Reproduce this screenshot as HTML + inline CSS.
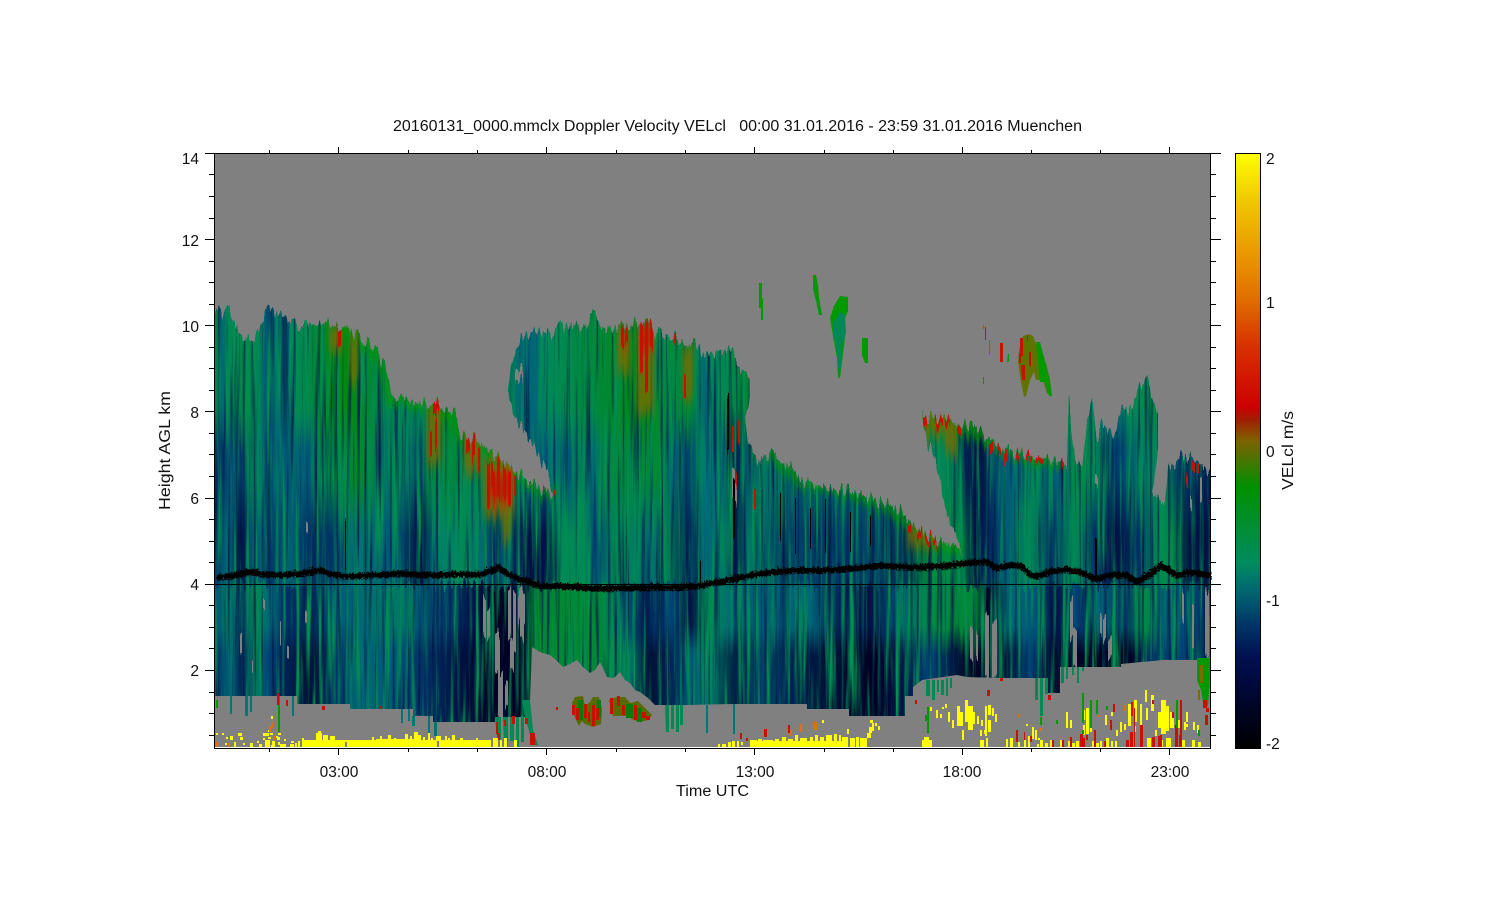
<!DOCTYPE html>
<html><head><meta charset="utf-8"><title>20160131_0000.mmclx Doppler Velocity VELcl</title>
<style>
html,body{margin:0;padding:0;background:#fff;width:1500px;height:900px;overflow:hidden}
#plot{position:absolute;left:215px;top:154px;width:995px;height:593px;background:#808080}
#w{position:absolute;left:0;top:0;width:1500px;height:900px;filter:url(#jag)}
#c{position:absolute;left:0;top:0;width:1500px;height:900px;clip-path:polygon(215px 322px,218px 310px,222px 318px,228px 303px,232px 320px,240px 332px,247px 338px,255px 338px,260px 322px,266px 310px,271px 305px,276px 312px,282px 320px,288px 317px,294px 323px,305px 327px,315px 330px,322px 320px,330px 326px,339px 327px,354px 333px,365px 342px,374px 348px,382px 362px,389px 377px,392px 398px,410px 401px,427px 405px,436px 403px,448px 410px,457px 417px,459px 432px,470px 437px,481px 443px,491px 452px,501px 460px,517px 473px,534px 485px,553px 495px,553px 493px,547px 470px,535px 450px,527px 433px,520px 427px,513px 410px,508px 393px,510px 373px,513px 357px,523px 337px,533px 332px,543px 332px,555px 333px,560px 328px,575px 325px,588px 323px,593px 315px,600px 325px,617px 328px,627px 325px,637px 323px,648px 322px,655px 333px,673px 337px,690px 342px,700px 350px,717px 352px,733px 353px,740px 367px,750px 380px,750px 397px,745px 420px,747px 437px,753px 453px,760px 462px,773px 450px,783px 463px,793px 470px,800px 480px,817px 485px,830px 490px,847px 490px,870px 498px,887px 505px,900px 510px,910px 523px,920px 530px,937px 540px,957px 547px,962px 550px,955px 533px,950px 523px,943px 500px,938px 467px,928px 443px,923px 423px,922px 417px,937px 417px,953px 422px,977px 430px,987px 440px,1003px 447px,1013px 453px,1043px 458px,1063px 463px,1067px 467px,1069px 400px,1072px 440px,1075px 463px,1083px 463px,1085px 437px,1092px 397px,1097px 440px,1102px 423px,1107px 427px,1113px 437px,1123px 407px,1133px 410px,1140px 383px,1147px 380px,1153px 397px,1158px 420px,1158px 453px,1152px 493px,1165px 505px,1168px 470px,1180px 457px,1193px 457px,1200px 467px,1210px 470px,1210px 730px,215px 730px)}
.b{position:absolute;left:0;width:1500px}
#d2{top:600px;height:150px;background:linear-gradient(90deg,#036 214px,#067 232px,#025 240px,#076 255px,#047 268px,#025 285px,#013 310px,#036 335px,#067 360px,#057 395px,#036 420px,#014 460px,#002 490px,#002 525px,#083 535px,#083 600px,#076 630px,#013 650px,#025 670px,#057 690px,#076 710px,#024 735px,#046 760px,#025 790px,#013 830px,#002 875px,#014 900px,#047 930px,#013 960px,#002 975px,#013 1005px,#047 1030px,#013 1050px,#002 1090px,#002 1130px,#036 1150px,#047 1180px,#025 1210px)}
#d1{top:584px;height:70px;-webkit-mask-image:linear-gradient(#000 60%,transparent);mask-image:linear-gradient(#000 60%,transparent);background:linear-gradient(90deg,#057 214px,#076 230px,#036 238px,#085 255px,#067 270px,#036 285px,#025 310px,#057 335px,#067 355px,#076 395px,#057 420px,#036 450px,#014 478px,#002 495px,#013 525px,#083 535px,#083 600px,#067 620px,#025 645px,#047 670px,#014 690px,#085 710px,#067 735px,#057 770px,#067 810px,#036 828px,#014 870px,#057 895px,#084 930px,#083 975px,#002 987px,#067 1010px,#057 1035px,#014 1055px,#047 1075px,#025 1090px,#067 1097px,#036 1125px,#084 1145px,#057 1165px,#047 1195px,#014 1210px)}
#cc{top:300px;height:285px;background:linear-gradient(90deg,#036 214px,#067 228px,#014 241px,#067 255px,#036 269px,#067 285px,#036 310px,#036 335px,#077 355px,#067 370px,#057 395px,#014 421px,#077 435px,#085 465px,#067 484px,#025 496px,#077 507px,#014 525px,#014 545px,#085 560px,#085 585px,#047 595px,#085 615px,#076 640px,#067 650px,#085 665px,#025 687px,#067 705px,#076 725px,#014 735px,#076 748px,#046 790px,#036 830px,#046 875px,#035 905px,#083 930px,#084 960px,#014 975px,#025 985px,#057 1005px,#085 1030px,#036 1052px,#085 1075px,#036 1095px,#014 1115px,#036 1140px,#085 1158px,#084 1172px,#014 1190px,#014 1210px)}
#bb{top:300px;height:235px;-webkit-mask-image:linear-gradient(#000 75%,transparent);mask-image:linear-gradient(#000 75%,transparent);background:linear-gradient(90deg,#036 214px,#036 224px,#067 232px,#036 241px,#085 252px,#077 262px,#036 267px,#067 276px,#057 287px,#067 298px,#057 309px,#085 320px,#083 345px,#082 360px,#084 372px,#057 382px,#085 395px,#076 410px,#036 420px,#084 428px,#083 450px,#085 470px,#083 490px,#083 510px,#067 525px,#057 545px,#077 552px,#057 568px,#085 582px,#067 592px,#084 605px,#083 660px,#067 672px,#046 688px,#077 705px,#067 722px,#014 733px,#056 745px,#076 770px,#056 800px,#066 840px,#056 880px,#076 915px,#085 950px,#025 965px,#014 980px,#057 1000px,#067 1017px,#085 1035px,#057 1050px,#067 1062px,#084 1075px,#085 1095px,#036 1110px,#047 1122px,#076 1140px,#085 1165px,#036 1180px,#025 1210px)}
#aa{top:300px;height:150px;-webkit-mask-image:linear-gradient(#000 72%,transparent);mask-image:linear-gradient(#000 72%,transparent);background:linear-gradient(90deg,#083 214px,#067 222px,#085 230px,#084 245px,#085 258px,#057 266px,#036 271px,#077 277px,#035 284px,#067 290px,#085 297px,#084 310px,#082 322px,#081 345px,#082 362px,#084 375px,#085 392px,#085 427px,#082 445px,#084 470px,#083 500px,#067 520px,#067 532px,#076 545px,#085 555px,#084 575px,#083 600px,#082 625px,#081 650px,#084 665px,#083 690px,#067 705px,#085 720px,#083 745px,#082 760px,#085 850px,#082 925px,#082 990px,#083 1060px,#084 1080px,#077 1100px,#067 1112px,#085 1130px,#084 1150px,#085 1210px)}
svg{position:absolute;left:0;top:0}
text{font-family:"Liberation Sans",sans-serif;font-size:15.5px;fill:#111}
</style></head><body>
<svg width="0" height="0" style="position:absolute"><defs>
<filter id="jag" x="0" y="0" width="1500" height="900" filterUnits="userSpaceOnUse" color-interpolation-filters="sRGB"><feTurbulence type="fractalNoise" baseFrequency="0.3 0.002" numOctaves="2" seed="7" result="n"/><feColorMatrix in="n" values="0 0 0 0 .5 0 2.2 0 0 -.6 0 0 0 0 .5 0 0 0 0 1" result="m"/><feDisplacementMap in="SourceGraphic" in2="m" scale="14" xChannelSelector="R" yChannelSelector="G"/></filter>
</defs></svg>
<div id="plot"></div>
<div id="w"><div id="c">
<div class="b" id="d2"></div><div class="b" id="d1"></div><div class="b" id="cc"></div><div class="b" id="bb"></div><div class="b" id="aa"></div>
<svg width="1500" height="900" viewBox="0 0 1500 900">
<defs>
<filter id="dk" x="214" y="300" width="1000" height="450" filterUnits="userSpaceOnUse" color-interpolation-filters="sRGB"><feTurbulence type="fractalNoise" baseFrequency="0.28 0.006" numOctaves="3" seed="4"/><feColorMatrix values="0 0 0 0 0 0 0 0 0 .08 0 0 0 0 .28 2.8 0 0 0 -1.45"/></filter>
<filter id="lt" x="214" y="300" width="1000" height="450" filterUnits="userSpaceOnUse" color-interpolation-filters="sRGB"><feTurbulence type="fractalNoise" baseFrequency="0.24 0.007" numOctaves="3" seed="11"/><feColorMatrix values="0 0 0 0 0 0 0 0 0 .56 0 0 0 0 .32 3.2 0 0 0 -1.45"/></filter>
<filter id="bl"><feGaussianBlur stdDeviation="3"/></filter>
<filter id="bx"><feGaussianBlur stdDeviation="2 6"/></filter>
</defs>
<rect x="214" y="300" width="1000" height="450" filter="url(#lt)"/>
<rect x="214" y="300" width="1000" height="450" filter="url(#dk)"/>
<path filter="url(#bl)" fill="none" stroke="#090" stroke-width="14" opacity=".6" d="M340 327L354 333 374 348 389 377 392 398 427 405 457 417 459 432 481 443 501 460 534 485 553 495M753 453L773 450 800 480 847 490 887 505 910 523 937 540 962 550M922 417L953 422 987 440 1013 453 1063 463"/>
<g filter="url(#bx)">
<path fill="#7a6a00" opacity=".8" d="M329 327h13v25h-13zM350 333h8v50h-8zM617 328h13v45h-13zM637 323h17v90h-17zM683 343h10v55h-10zM427 405h14v60h-14zM464 433h17v40h-17zM484 457h30v60h-30zM503 510h8v30h-8zM923 417h34v18h-34zM945 430h12v25h-12zM907 527h30v20h-30z"/>
<path fill="#cc1000" opacity=".75" d="M640 324h12v30h-12zM488 470h24v34h-24zM622 328h5v20h-5z"/>
</g>
<path fill="#c81000" d="M338 327h3v16h-3zM433 403h6v12h-6zM435 420h2v30h-2zM430 430h2v25h-2zM466 434h4v16h-4zM472 440h3v22h-3zM478 446h2v25h-2zM487 462h3v45h-3zM491 465h4v25h-4zM497 462h3v40h-3zM503 466h3v30h-3zM508 472h3v35h-3zM514 474h2v20h-2zM640 322h3v50h-3zM645 325h3v70h-3zM650 325h3v28h-3zM621 330h3v20h-3zM625 328h3v14h-3zM684 370h2v25h-2zM674 340h2v10h-2zM738 420h2v25h-2zM732 430h2v25h-2zM735 470h2v30h-2zM754 490h2v20h-2zM923 417h4v9h-4zM935 418h8v8h-8zM945 420h5v8h-5zM957 425h4v8h-4zM990 445h3v10h-3zM998 446h3v6h-3zM1004 450h3v12h-3zM1016 456h3v6h-3zM1026 455h6v7h-6zM1036 456h7v7h-7zM1062 463h2v8h-2zM1192 460h3v10h-3zM1186 470h2v12h-2zM1197 466h2v10h-2zM908 527h3v8h-3zM917 531h5v7h-5zM925 535h6v6h-6zM933 540h5v5h-5zM554 493h2v5h-2z"/>
<path fill="#808080" d="M515 370h8v11h-8zM483 597h3v38h-3zM487 610h3v30h-3zM495 633h5v40h-5zM498 670h5v47h-5zM508 590h3v50h-3zM513 592h3v60h-3zM518 592h7v30h-7zM520 622h4v20h-4zM510 645h4v30h-4zM505 680h3v25h-3zM985 612h4v65h-4zM992 622h5v55h-5zM970 625h3v32h-3zM976 628h2v26h-2zM1070 597h3v40h-3zM1073 630h4v37h-4zM1103 617h3v25h-3zM1108 640h4v20h-4zM1205 590h4v67h-4zM1192 610h2v45h-2zM1182 590h2v30h-2zM1095 473h3v10h-3zM1100 620h2v20h-2zM732 470h3v28h-3zM735 485h2v18h-2zM306 522h2v10h-2zM1190 500h2v12h-2zM1200 480h2v25h-2zM263 605h2v10h-2zM280 620h1v25h-1zM305 610h2v12h-2zM240 640h2v20h-2zM287 645h2v12h-2zM252 665h1v12h-1z"/>
<path fill="#000" d="M727 400h2v55h-2zM733 480h2v60h-2zM700 560h1v24h-1zM1095 540h2v44h-2zM780 490h1v50h-1zM795 500h1v55h-1zM810 510h1v40h-1zM825 500h1v50h-1zM850 510h1v40h-1zM870 520h1v30h-1zM345 520h1v50h-1z"/>
</svg>
</div></div>
<svg width="1500" height="900" viewBox="0 0 1500 900">
<defs>
<filter id="jit" x="200" y="540" width="1020" height="60" filterUnits="userSpaceOnUse"><feTurbulence type="turbulence" baseFrequency="0.35" numOctaves="2" seed="2"/><feDisplacementMap in="SourceGraphic" scale="6" yChannelSelector="R" xChannelSelector="G"/></filter>
<linearGradient id="cb" x1="0" y1="153" x2="0" y2="748" gradientUnits="userSpaceOnUse">
<stop offset="0" stop-color="#ff0"/><stop offset=".08" stop-color="#f0c800"/><stop offset=".185" stop-color="#e89000"/><stop offset=".243" stop-color="#e07000"/><stop offset=".326" stop-color="#d83000"/><stop offset=".427" stop-color="#c00"/><stop offset=".449" stop-color="#a02000"/><stop offset=".482" stop-color="#806000"/><stop offset=".521" stop-color="#407800"/><stop offset=".561" stop-color="#009000"/><stop offset=".69" stop-color="#008c60"/><stop offset=".734" stop-color="#006870"/><stop offset=".79" stop-color="#003868"/><stop offset=".847" stop-color="#001050"/><stop offset=".886" stop-color="#000a40"/><stop offset=".987" stop-color="#000008"/><stop offset="1" stop-color="#000"/>
</linearGradient>
</defs>
<!-- gray below the cloud base -->
<path fill="#808080" d="M1210 657L1197 660 1163 660 1121 664V667H1060V693H1048V678H1000L967 677 957 675 922 680 913 687V696H905V716H849V709H807V704H733L683 705H655L648 698 640 692 635 690 630 683 625 680 620 672 614 678 607 677 603 668 600 662 595 670 590 673 583 667 577 660 570 664 563 667 556 660 550 655 540 652 532 647 530 700V717H495V722H433V716H413V709H350V704H297V696H215V747H1210z"/>
<!-- islands -->
<path fill="#090" d="M759 283h3v15h1v22h-2v-12h-2zM813 275h3l2 10 1 12 3 18h-3l-3-14-3-12zM830 318l4-12 6-10 8 1v14l-5 12 2 15-3 24-2 16h-2l-1-20-4-22zM862 338h6v25h-3l-3-8zM1007 362l1-8h1v8zM983 377h1v7h-1z"/>
<path fill="#085" d="M834 322l6-10 5 3 1 18-4 12-1 20-2 12-2-24-3-18z"/>
<path fill="#5f7300" d="M1019 350l4-14 6-2 4 2 3 8 4 0 4 13 3 10 3 12 1 15h-4l-4-14h-7l-2-8-4 8-4 16-2 1-3-15-3-20z"/>
<path fill="#090" d="M1036 342h4l4 16 4 15 3 15 1 8h-3l-4-14h-5l-2-20z"/>
<path fill="#c81000" d="M1020 338h3v18h-2v7h-2v-10h1zM1021 365h4v15h-3zM1000 343h3v19h-3zM985 327h1v13h-1zM1027 335h1v6h-1zM1029 352h2v14h-2z"/>
<path fill="#7f6a00" d="M989 340h1v15h-1zM983 325h1v4h-1z"/>
<!-- lower clusters -->
<path fill="#5a6a00" d="M572 703l3-6 8-1 2 10 5-4 3-5h6l3 12-1 15-8 3-8-3-3-3-3 5-4-8zM609 700l8-3h8l5 6 8-2 6 6 8 8-4 5-8 2-6-2-8-4h-13z"/>
<path fill="#087b10" d="M578 700h5v20h-5zM597 700h4v18h-4zM626 704h7v14h-7zM637 708h5v14h-5z"/>
<path fill="#c81000" d="M572 705h3v10h-3zM576 708h3v12h-3zM584 704h3v14h-3zM588 712h2v10h-2zM592 705h3v21h-3zM596 708h3v12h-3zM610 698h3v16h-3zM617 696h3v10h-3zM622 705h3v10h-3zM634 705h3v15h-3zM642 712h4v6h-4zM646 716h4v4h-4z"/>
<!-- hanging green/teal -->
<path fill="#085" d="M665 705h4v27h-3zM671 705h3v24h-3zM676 705h3v27h-3zM680 705h3v20h-3zM926 680h4v16h-4zM932 680h3v20h-3zM937 680h2v12h-2zM941 680h3v15h-3zM946 678h2v18h-2zM950 678h2v10h-2zM1035 678h3v22h-3zM1040 678h3v38h-3zM1045 678h3v16h-3zM1061 667h3v16h-3zM1066 667h2v12h-2zM1072 667h2v8h-2zM1077 667h2v16h-2zM1082 667h2v4h-2z"/>
<path fill="#077" d="M230 696h2v18h-2zM245 696h3v20h-3zM250 696h2v16h-2zM292 696h2v20h-2zM401 709h2v14h-2zM408 709h2v12h-2zM412 716h3v10h-3zM428 716h2v17h-2zM434 722h3v14h-3zM733 704h2v30h-2zM706 705h2v28h-2zM1204 665h4v40h-4z"/>
<path fill="#090" d="M278 696h2v36h-2zM216 700h2v8h-2zM1197 658h13v20l-2 28-4 2-3-18-4-10z"/>
<path fill="#085" d="M495 717h6v22h-4zM503 717h5v30h-4zM510 717h4v24h-4zM516 717h3v30h-3zM521 716h3v26h-3z"/>
<path fill="#085" d="M522 700h8l3 30 5 15h-6l-3-15-4-12z"/>
<path fill="#7f6a00" d="M1200 665h3v18h-3zM1198 690h2v10h-2z"/>
<path fill="#c81000" d="M530 733h5v12h-5zM525 718h3v6h-3zM496 722h2v12h-2zM498 733h2v7h-2zM504 720h2v6h-2zM512 716h3v8h-3zM277 693h2v12h-2zM286 700h2v6h-2zM322 706h3v4h-3zM380 706h2v3h-2zM556 707h2v3h-2zM1203 700h4v8h-4zM1206 708h3v4h-3zM764 729h3v8h-3zM788 725h2v8h-2zM740 733h2v6h-2zM746 738h2v3h-2zM915 700h2v4h-2zM1048 695h3v5h-3zM1000 678h3v3h-3zM987 690h3v6h-3z"/>
<!-- bottom yellow -->
<path fill="#ff0" d="M325 740H491V747H325zM316 733h6v7h-6zM318 731h3v3h-3zM323 735h5v6h-5zM330 736h5v4h-5zM304 740h21v7h-21zM372 737h2v4h-2zM380 736h2v4h-2zM388 735h3v5h-3zM394 738h2v2h-2zM376 739h40v2h-40zM405 734h3v6h-3zM410 736h2v4h-2zM414 732h4v8h-4zM418 735h3v5h-3zM423 737h2v3h-2zM428 733h2v7h-2zM431 738h2v2h-2zM436 736h5v4h-5zM445 736h2v4h-2zM448 738h2v2h-2zM452 735h3v5h-3zM460 738h3v2h-3zM476 738h2v2h-2zM493 738h5v9h-5zM500 740h2v7h-2zM504 738h3v9h-3zM514 740h3v7h-3z
M216 733h2v2h-2zM222 733h2v2h-2zM226 737h2v2h-2zM230 736h3v4h-3zM238 733h2v2h-2zM240 737h3v3h-3zM234 742h2v5h-2zM250 743h3v4h-3zM257 741h2v2h-2zM238 733h4v3h-4zM243 743h2v2h-2zM263 733h6v3h-6zM270 733h3v2h-3zM276 736h2v2h-2zM278 733h3v2h-3zM265 740h5v7h-5zM272 741h3v6h-3zM278 742h2v3h-2zM283 744h3v3h-3zM291 741h3v2h-3zM277 737h3v3h-3zM284 739h2v2h-2zM263 738h2v2h-2zM268 737h3v2h-3zM295 743h2v4h-2zM298 741h2v6h-2zM302 738h2v9h-2zM306 742h2v5h-2zM290 744h4v3h-4zM259 744h3v3h-3zM225 743h2v2h-2zM216 743h2v4h-2zM280 744h3v3h-3zM271 745h2v2h-2z
M722 744h4v3h-4zM728 742h3v5h-3zM732 741h3v6h-3zM737 741h2v6h-2zM741 742h2v3h-2zM750 740h7v7h-7zM758 739h4v8h-4zM763 740h10v7h-10zM775 739h4v8h-4zM782 737h4v10h-4zM788 739h5v8h-5zM795 735h3v12h-3zM800 738h7v9h-7zM810 737h3v10h-3zM815 735h3v12h-3zM820 737h4v10h-4zM826 735h6v12h-6zM834 734h3v13h-3zM839 735h2v12h-2zM842 737h6v10h-6zM850 738h5v9h-5zM856 737h3v10h-3zM860 738h7v9h-7zM867 733h4v5h-4zM869 727h3v6h-3zM872 723h2v8h-2zM875 723h2v3h-2zM878 726h2v4h-2zM870 720h3v3h-3zM756 741h92v6h-92z
M1026 724h2v2h-2zM1032 727h2v12h-2zM1035 730h2v10h-2zM922 740h10v7h-10zM924 737h5v4h-5zM962 730h2v10h-2zM965 700h3v22h-3zM960 712h3v14h-3zM952 720h2v8h-2zM957 706h3v20h-3zM968 706h5v24h-5zM973 712h2v12h-2zM948 712h2v10h-2zM936 710h2v8h-2zM940 714h2v4h-2zM927 718h2v6h-2zM945 704h2v4h-2zM942 707h2v2h-2zM930 707h2v4h-2zM977 716h2v8h-2zM981 720h2v6h-2zM985 706h2v30h-2zM988 705h3v10h-3zM992 708h2v8h-2zM995 714h2v8h-2zM988 720h3v12h-3zM980 740h4v7h-4zM986 738h2v9h-2zM980 730h2v6h-2zM984 730h2v4h-2zM1006 739h2v8h-2zM1010 738h3v9h-3zM1018 742h2v5h-2zM1024 740h2v7h-2zM1028 736h2v11h-2zM1040 740h3v7h-3zM1045 743h3v4h-3zM1050 740h3v7h-3zM1060 740h3v7h-3zM1038 738h2v2h-2zM1037 744h2v3h-2zM1068 741h2v6h-2zM1072 743h3v4h-3zM1076 741h3v6h-3zM1083 710h2v10h-2zM1086 708h3v26h-3zM1090 706h2v12h-2zM1083 725h2v10h-2zM1090 722h2v10h-2zM1066 712h2v16h-2zM1070 720h2v8h-2zM1092 741h3v6h-3zM1096 743h3v4h-3zM1100 741h2v6h-2zM1106 738h3v9h-3zM1111 741h2v6h-2zM1115 741h2v6h-2zM1120 722h2v10h-2zM1124 724h2v6h-2zM1128 704h3v22h-3zM1134 700h3v22h-3zM1134 726h2v6h-2zM1140 704h2v26h-2zM1145 690h2v12h-2zM1146 708h2v12h-2zM1151 695h3v16h-3zM1158 712h3v16h-3zM1161 700h5v34h-5zM1166 706h3v25h-3zM1170 712h4v16h-4zM1155 730h2v6h-2zM1178 720h2v8h-2zM1184 722h2v8h-2zM1186 712h2v10h-2zM1182 740h3v7h-3zM1193 722h2v8h-2zM1197 725h2v8h-2zM1192 740h3v7h-3zM1198 742h3v5h-3zM1140 741h2v6h-2zM1147 738h4v9h-4zM1160 740h3v7h-3zM1166 738h5v9h-5zM1175 743h3v4h-3zM1105 715h2v10h-2zM1111 712h2v4h-2zM1116 730h2v6h-2z"/>
<path fill="#c81000" d="M1080 734h3v13h-3zM1083 738h2v9h-2zM1094 730h2v17h-2zM1104 741h2v6h-2zM1126 740h3v7h-3zM1130 732h3v15h-3zM1134 708h1v39h-1zM1140 725h3v22h-3zM1152 737h3v10h-3zM1160 735h2v12h-2zM1175 725h3v22h-3zM1180 700h2v35h-2zM1179 735h3v12h-3zM1052 740h2v7h-2zM1062 740h2v7h-2zM1070 737h2v10h-2zM1110 720h2v10h-2zM1205 715h3v10h-3zM1016 730h2v12h-2zM1030 736h2v6h-2zM1024 732h1v8h-1zM1086 735h2v5h-2zM1158 736h2v11h-2zM1172 712h2v6h-2zM1152 700h2v4h-2zM1131 702h2v14h-2zM1113 704h2v8h-2z"/>
<path fill="#e07000" d="M216 742h2v5h-2zM228 743h2v4h-2zM273 736h2v4h-2zM271 722h2v6h-2zM269 727h2v5h-2zM800 724h2v8h-2zM814 722h3v8h-3zM790 730h2v6h-2zM1124 705h2v6h-2zM1018 714h2v3h-2zM1040 728h2v3h-2zM1098 715h2v2h-2z"/>
<path fill="#ff0" d="M822 720h2v3h-2zM718 744h2v3h-2zM271 716h2v3h-2zM268 730h1v2h-1zM847 729h2v5h-2zM1186 724h2v3h-2z"/>
<path fill="#090" d="M927 707h2v26h-2zM925 715h4v6h-4zM1198 730h2v6h-2zM1090 700h2v28h-2zM1176 700h2v28h-2zM1082 730h2v4h-2zM1106 706h2v4h-2zM1040 717h2v8h-2zM1056 720h2v4h-2zM1082 693h2v30h-2zM1096 700h2v14h-2z"/>
<path fill="#808080" d="M345 742h2v5h-2zM437 741h2v6h-2z"/>
<!-- ceilometer line and 4km line -->
<path filter="url(#jit)" fill="none" stroke="#000" stroke-width="6" d="M215 576L228 575 240 572 250 570 260 573 280 574 300 572 320 569 330 573 345 575 370 574 400 572 430 574 450 573 480 573 490 569 497 566 505 572 515 577 525 580 540 585 560 585 600 587 640 586 680 586 700 584 720 580 740 576 760 572 790 569 820 569 850 567 880 564 910 566 940 565 965 562 985 560 995 567 1010 563 1020 565 1030 574 1035 575 1050 570 1065 568 1080 571 1095 578 1110 573 1125 574 1135 580 1150 572 1160 564 1175 574 1190 571 1205 573 1210 574"/>
<path fill="#000" d="M214 584h1007v1h-1007z"/>
<!-- frame + ticks -->
<g fill="none" stroke="#000" stroke-width="1.2" shape-rendering="crispEdges">
<rect x="214.5" y="153.5" width="996" height="595"/>
<path d="M205 153.5h9M205 239.5h9M205 325.5h9M205 411.5h9M205 498.5h9M205 584.5h9M205 670.5h9M209 174.5h5M209 196.5h5M209 218.5h5M209 261.5h5M209 282.5h5M209 304.5h5M209 347.5h5M209 368.5h5M209 390.5h5M209 433.5h5M209 454.5h5M209 476.5h5M209 519.5h5M209 541.5h5M209 562.5h5M209 605.5h5M209 627.5h5M209 648.5h5M209 692.5h5M209 713.5h5M209 735.5h5"/>
<path d="M1211 153.5h10M1211 239.5h10M1211 325.5h10M1211 411.5h10M1211 498.5h10M1211 584.5h10M1211 670.5h10M1211 174.5h5M1211 196.5h5M1211 218.5h5M1211 261.5h5M1211 282.5h5M1211 304.5h5M1211 347.5h5M1211 368.5h5M1211 390.5h5M1211 433.5h5M1211 454.5h5M1211 476.5h5M1211 519.5h5M1211 541.5h5M1211 562.5h5M1211 605.5h5M1211 627.5h5M1211 648.5h5M1211 692.5h5M1211 713.5h5M1211 735.5h5"/>
<path d="M338.5 147v6M546.5 147v6M754.5 147v6M962.5 147v6M1169.5 147v6M269.5 150v3M408.5 150v3M477.5 150v3M616.5 150v3M685.5 150v3M824.5 150v3M893.5 150v3M1031.5 150v3M1100.5 150v3"/>
<path d="M338.5 749v6M546.5 749v6M754.5 749v6M962.5 749v6M1169.5 749v6M269.5 749v3M408.5 749v3M477.5 749v3M616.5 749v3M685.5 749v3M824.5 749v3M893.5 749v3M1031.5 749v3M1100.5 749v3"/>
</g>
<!-- colorbar -->
<rect x="1235.5" y="153.5" width="25" height="595" fill="url(#cb)" stroke="#000" stroke-width="1.2" shape-rendering="crispEdges"/>
<!-- text -->
<text x="393" y="131" textLength="689" lengthAdjust="spacingAndGlyphs" xml:space="preserve">20160131_0000.mmclx Doppler Velocity VELcl   00:00 31.01.2016 - 23:59 31.01.2016 Muenchen</text>
<g text-anchor="end"><text x="199" y="164">14</text><text x="199" y="246">12</text><text x="199" y="332">10</text><text x="199" y="418">8</text><text x="199" y="504">6</text><text x="199" y="590">4</text><text x="199" y="676">2</text></g>
<g text-anchor="middle"><text x="339" y="777">03:00</text><text x="547" y="777">08:00</text><text x="755" y="777">13:00</text><text x="962" y="777">18:00</text><text x="1170" y="777">23:00</text></g>
<text x="676" y="796" textLength="73" lengthAdjust="spacingAndGlyphs">Time UTC</text>
<text transform="translate(170 510) rotate(-90)" textLength="119" lengthAdjust="spacingAndGlyphs">Height AGL km</text>
<text x="1266" y="164">2</text><text x="1266" y="308">1</text><text x="1266" y="457">0</text><text x="1266" y="606">-1</text><text x="1266" y="749">-2</text>
<text transform="translate(1293 490) rotate(-90)" textLength="79" lengthAdjust="spacingAndGlyphs">VELcl m/s</text>
</svg>
</body></html>
